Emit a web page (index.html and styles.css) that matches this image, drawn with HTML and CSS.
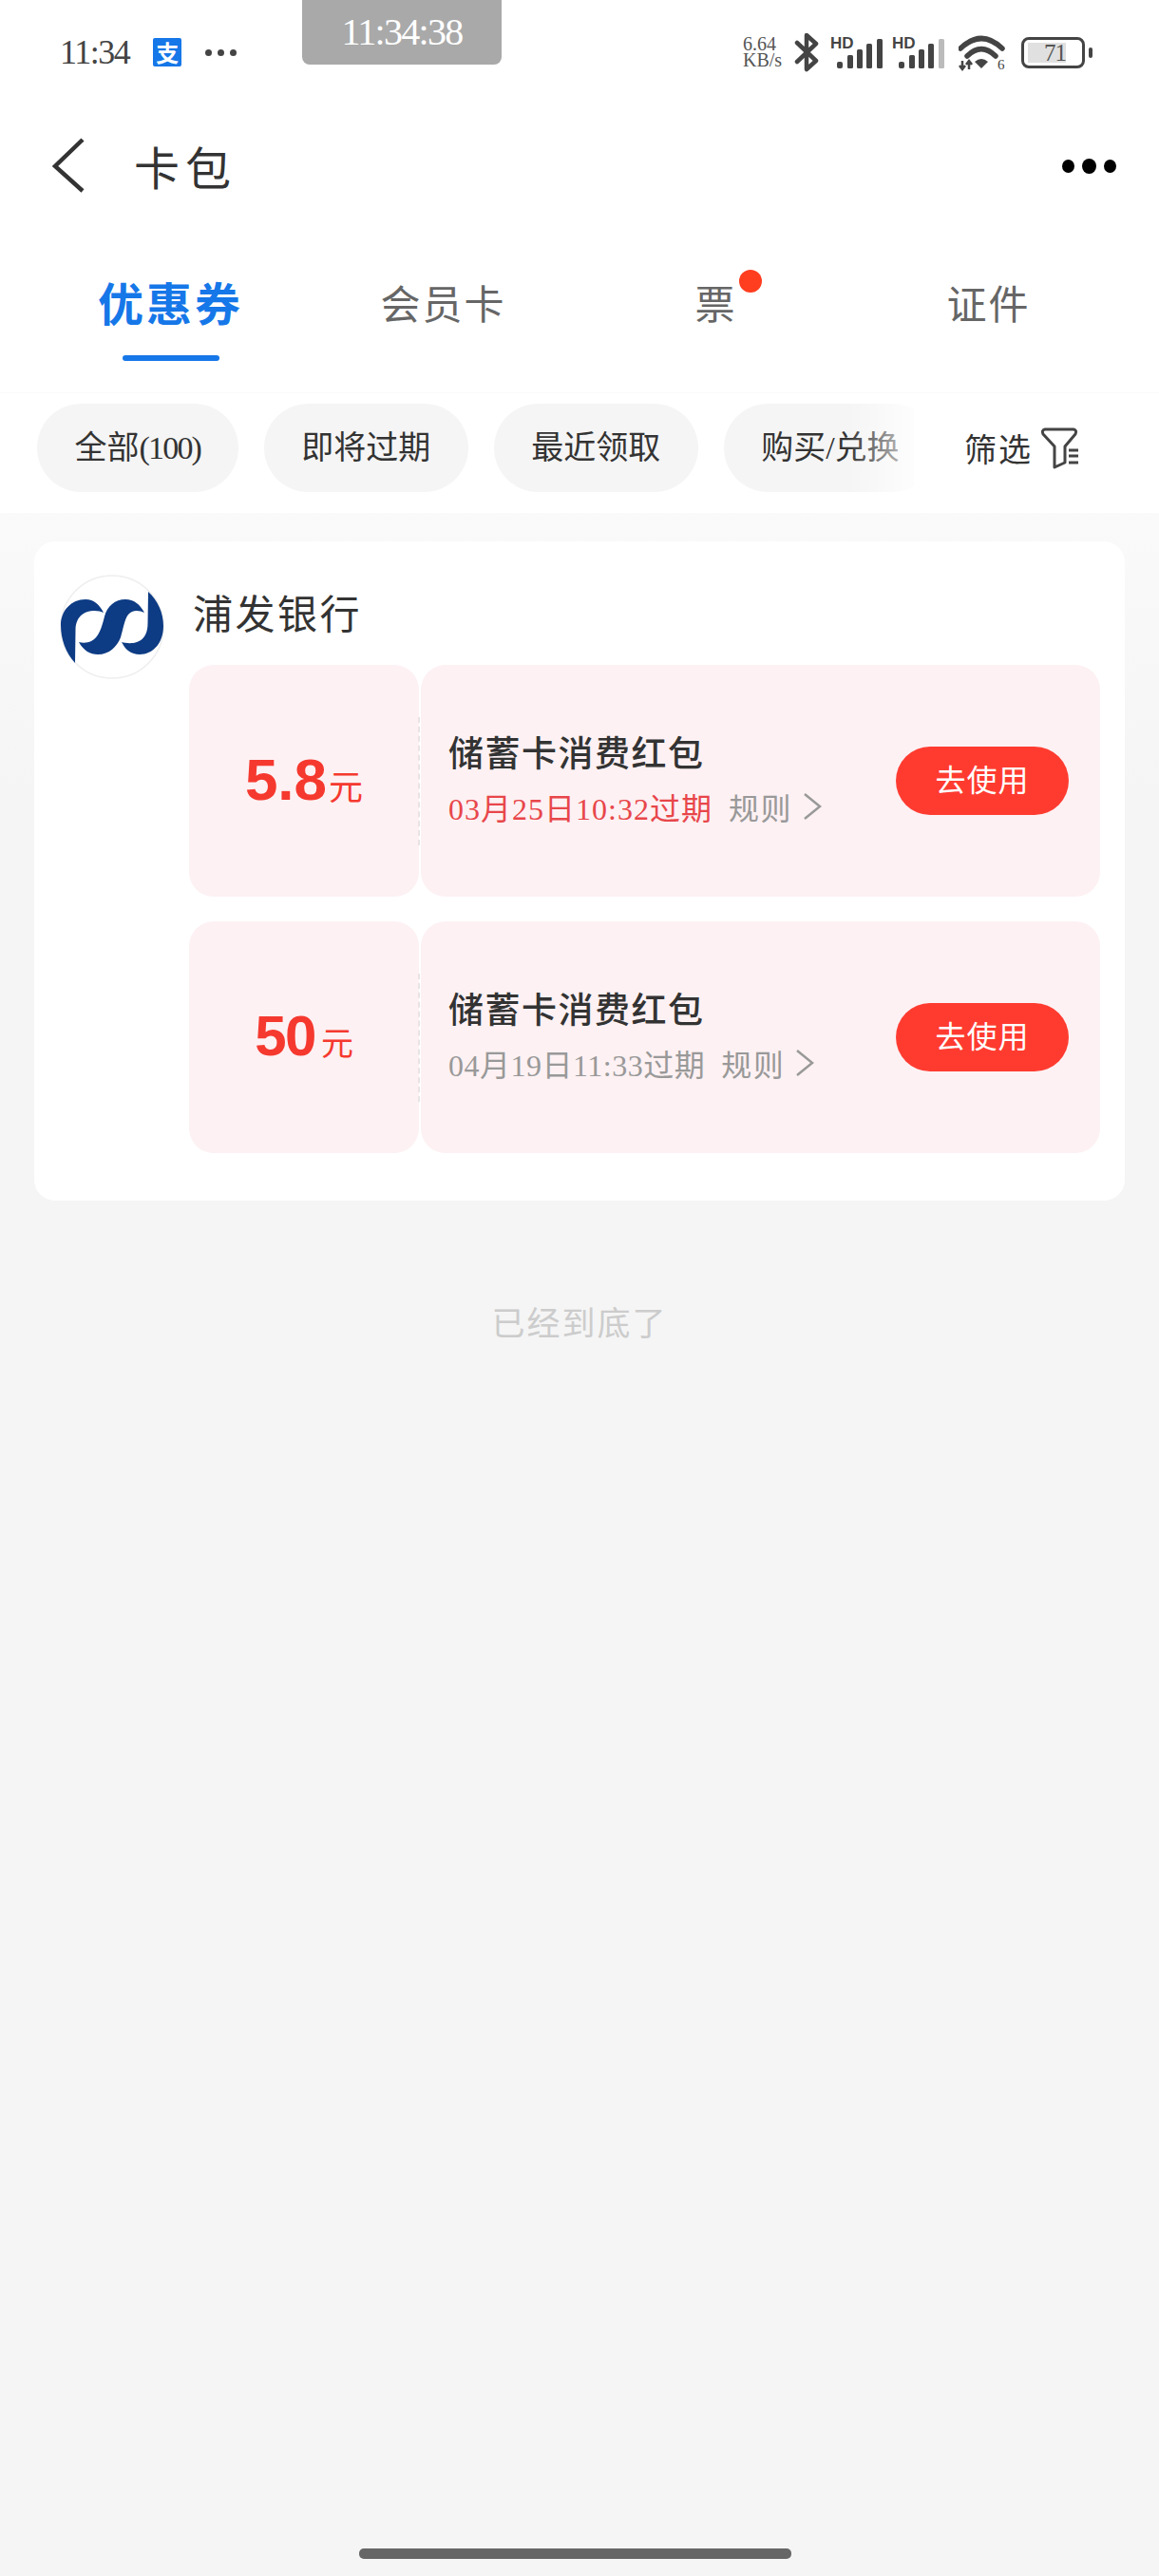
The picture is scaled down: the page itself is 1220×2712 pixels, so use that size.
FILE: index.html
```html
<!DOCTYPE html>
<html lang="zh-CN">
<head>
    <meta charset="UTF-8">
    <meta name="viewport" content="width=device-width, initial-scale=1.0">
    <title>卡包</title>
    <link rel="stylesheet" href="styles.css">
</head>
<body>
    <div class="page">
        <div class="top">
            <div class="status">
                <span class="time">11:34</span>
                <span class="ali-icon">支</span>
                <span class="status-dots"><i></i><i></i><i></i></span>
                <div class="status-right">
                    <div class="speed"><span>6.64</span><span>KB/s</span></div>
                    <svg class="bt" width="26" height="42" viewBox="0 0 26 42"><path d="M3 11 L23 30 L13 39 V3 L23 12 L3 31" fill="none" stroke="#444" stroke-width="4.5" stroke-linejoin="round" stroke-linecap="round"/></svg>
                    <svg class="sig" width="55" height="40" viewBox="0 -3 55 40">
                        <text x="0" y="13" class="hd">HD</text>
                        <rect x="7" y="27" width="6" height="7" rx="2" fill="#444"/>
                        <rect x="18" y="20" width="6" height="14" rx="1.5" fill="#444"/>
                        <rect x="28" y="14" width="6" height="20" rx="1.5" fill="#444"/>
                        <rect x="38" y="8" width="6" height="26" rx="1.5" fill="#444"/>
                        <rect x="49" y="3" width="6" height="31" rx="1.5" fill="#444"/>
                    </svg>
                    <svg class="sig sig2" width="55" height="40" viewBox="0 -3 55 40">
                        <text x="0" y="13" class="hd">HD</text>
                        <rect x="7" y="27" width="6" height="7" rx="2" fill="#444"/>
                        <rect x="18" y="20" width="6" height="14" rx="1.5" fill="#444"/>
                        <rect x="28" y="14" width="6" height="20" rx="1.5" fill="#444"/>
                        <rect x="38" y="8" width="6" height="26" rx="1.5" fill="#444"/>
                        <rect x="49" y="3" width="6" height="31" rx="1.5" fill="#bbb"/>
                    </svg>
                    <svg class="wifi" width="49" height="44" viewBox="0 -3 49 44">
                        <path d="M2 15 Q24 -6 46 15" fill="none" stroke="#444" stroke-width="5.5" stroke-linecap="round"/>
                        <path d="M9 23 Q24 8 39 23" fill="none" stroke="#444" stroke-width="5.5" stroke-linecap="round"/>
                        <path d="M17 29 Q24 23 31 29 L24 36 Z" fill="#444"/>
                        <path d="M4 28 V37 M1 33 L4 37 L7 33 M11 37 V28 M8 32 L11 28 L14 32" fill="none" stroke="#444" stroke-width="2.5"/>
                        <text x="41" y="37" class="wifi-num">6</text>
                    </svg>
                    <div class="battery"><div class="battery-fill">71</div></div>
                </div>
            </div>
            <div class="clock">11:34:38</div>

            <div class="nav">
                <svg width="34" height="58" viewBox="0 0 34 58"><path d="M32 2 L3 30 L32 56" fill="none" stroke="#333" stroke-width="4.5"/></svg>
                <h1 class="nav-title">卡包</h1>
                <div class="more"><i></i><i class="big"></i><i></i></div>
            </div>

            <div class="tabs">
                <div class="tab active"><span>优惠券</span><div class="tab-line"></div></div>
                <div class="tab"><span>会员卡</span></div>
                <div class="tab"><span class="has-dot">票</span></div>
                <div class="tab"><span>证件</span></div>
            </div>

            <div class="filters">
                <div class="chips">
                    <div class="chip">全部<span class="chip-count">(100)</span></div>
                    <div class="chip">即将过期</div>
                    <div class="chip">最近领取</div>
                    <div class="chip">购买/兑换</div>
                </div>
                <div class="filter-btn">
                    <span>筛选</span>
                    <svg width="40" height="44" viewBox="0 0 40 44">
                        <path d="M5 2 H35 Q39 3 37 7 L26 20 V37 L15 42 V20 L3 7 Q1 3 5 2 Z" fill="none" stroke="#444" stroke-width="3" stroke-linejoin="round"/>
                        <path d="M30 24 H40 M30 30 H40 M30 37 H40" stroke="#444" stroke-width="3"/>
                    </svg>
                </div>
            </div>
        </div>

        <div class="content">
            <div class="card">
                <svg class="bank-logo" width="110" height="110" viewBox="0 0 110 110">
                    <circle cx="55" cy="55" r="54" fill="#fff" stroke="#eee" stroke-width="1.5"/>
                    <path d="M16 93 C6 82 1 68 1 53 C1 38 12 26 27 26 C36 26 42 32 46 40 C38 36 17 36 16.5 58 Z" fill="#0d3b84"/>
                    <path d="M89 40 C84 31 78 26 69 26 C58 26 50 33 47 44 C44 56 41 66 33 70 C29 72 24 72 20 71 C25 80 32 84 40 84 C52 84 60 76 64 66 C67 56 68 47 72 42 C76 37 83 37 89 40 Z" fill="#0d3b84"/>
                    <path d="M93 18 C103 27 109 40 109 54 C109 72 98 84 84 84 C75 84 69 79 65 71 C73 73 92 75 92.5 52 Z" fill="#0d3b84"/>
                </svg>
                <div class="card-main">
                    <div class="bank-name">浦发银行</div>
                    <div class="coupon">
                        <div class="coupon-left">
                            <span class="amount">5.8</span><span class="unit">元</span>
                        </div>
                        <div class="coupon-body">
                            <div>
                                <div class="coupon-title">储蓄卡消费红包</div>
                                <div class="coupon-meta">
                                    <span class="expire soon">03月25日10:32过期</span>
                                    <span class="rule">规则</span>
                                    <svg width="20" height="30" viewBox="0 0 20 30"><path d="M2 2 L18 15 L2 28" fill="none" stroke="#999" stroke-width="2.5"/></svg>
                                </div>
                            </div>
                            <div class="use-btn">去使用</div>
                        </div>
                    </div>
                    <div class="coupon">
                        <div class="coupon-left">
                            <span class="amount narrow">50</span><span class="unit">元</span>
                        </div>
                        <div class="coupon-body">
                            <div>
                                <div class="coupon-title">储蓄卡消费红包</div>
                                <div class="coupon-meta">
                                    <span class="expire">04月19日11:33过期</span>
                                    <span class="rule">规则</span>
                                    <svg width="20" height="30" viewBox="0 0 20 30"><path d="M2 2 L18 15 L2 28" fill="none" stroke="#999" stroke-width="2.5"/></svg>
                                </div>
                            </div>
                            <div class="use-btn">去使用</div>
                        </div>
                    </div>
                </div>
            </div>
            <div class="end-note">已经到底了</div>
            <div class="home-bar"></div>
        </div>
    </div>
</body>
</html>
```

FILE: styles.css
```css
* {
    box-sizing: border-box;
}
body {
    margin: 0;
    background: #f5f5f5;
    font-family: "Liberation Serif", "Noto Sans CJK SC", serif;
    color: #333;
}
.page {
    position: relative;
    display: flex;
    flex-direction: column;
    min-height: 2712px;
}
.top {
    background: #fff;
}

/* status bar */
.status {
    display: flex;
    align-items: center;
    height: 110px;
    padding: 0 70px 0 63px;
}
.time {
    font-size: 36px;
    letter-spacing: -1.5px;
    color: #444;
}
.ali-icon {
    display: flex;
    justify-content: center;
    align-items: center;
    width: 30px;
    height: 30px;
    margin-left: 25px;
    background: #1677e8;
    border-radius: 2px;
    color: #fff;
    font-size: 24px;
    line-height: 30px;
    font-weight: 700;
    font-family: "Noto Sans CJK SC", sans-serif;
}
.status-dots {
    display: flex;
    gap: 6px;
    margin-left: 25px;
}
.status-dots i {
    width: 7px;
    height: 7px;
    border-radius: 50%;
    background: #444;
}
.status-right {
    display: flex;
    align-items: center;
    gap: 12px;
    margin-left: auto;
}
.speed {
    display: flex;
    flex-direction: column;
    width: 41px;
    font-size: 20px;
    line-height: 17px;
    color: #555;
}
.bt {
    margin-left: 1px;
}
.hd {
    font-family: "Liberation Sans", sans-serif;
    font-size: 17px;
    font-weight: 700;
    fill: #444;
}
.sig2 {
    margin-left: -2px;
}
.wifi {
    margin-left: 3px;
}
.wifi-num {
    font-family: "Liberation Serif", serif;
    font-size: 15px;
    fill: #444;
}
.battery {
    position: relative;
    width: 67px;
    height: 33px;
    margin-left: 5px;
    margin-right: 8px;
    padding: 3px 4px;
    border: 3px solid #444;
    border-radius: 8px;
}
.battery::after {
    content: "";
    position: absolute;
    top: 8px;
    right: -11px;
    width: 4px;
    height: 11px;
    border-radius: 2px;
    background: #444;
}
.battery-fill {
    width: 40px;
    height: 21px;
    background: #e0e0e0;
    font-size: 25px;
    line-height: 22px;
    letter-spacing: -1px;
    text-align: right;
    color: #555;
}
.clock {
    position: absolute;
    top: 0;
    left: 318px;
    width: 210px;
    height: 68px;
    background: #a9a9a9;
    border-radius: 0 0 8px 8px;
    color: #fff;
    font-size: 40px;
    letter-spacing: -1.7px;
    line-height: 68px;
    text-align: center;
}

/* title bar */
.nav {
    display: flex;
    align-items: center;
    height: 128px;
    padding: 0 45px 0 55px;
}
.nav-title {
    margin: 0 0 0 52px;
    font-size: 48px;
    font-weight: 400;
    letter-spacing: 6px;
}
.more {
    display: flex;
    align-items: center;
    gap: 8px;
    margin-top: 2px;
    margin-left: auto;
}
.more i {
    width: 13px;
    height: 14px;
    border-radius: 50%;
    background: #000;
}
.more i.big {
    width: 15px;
    height: 16px;
}

/* tabs */
.tabs {
    display: grid;
    grid-template-columns: repeat(4, 1fr);
    height: 176px;
    padding: 54px 36px 0;
    border-bottom: 1px solid #fafafa;
}
.tab {
    display: flex;
    flex-direction: column;
    align-items: center;
    font-size: 42px;
    line-height: 60px;
    letter-spacing: 2px;
    color: #666;
}
.tab.active {
    font-size: 48px;
    font-weight: 700;
    letter-spacing: 3px;
    color: #1677e8;
}
.tab-line {
    width: 102px;
    height: 6px;
    margin-top: 22px;
    border-radius: 3px;
    background: #1677e8;
}
.has-dot {
    position: relative;
}
.has-dot::after {
    content: "";
    position: absolute;
    top: -8px;
    left: 47px;
    width: 24px;
    height: 24px;
    border-radius: 50%;
    background: #ff3d1f;
}

/* filter chips */
.filters {
    display: flex;
    align-items: center;
    padding: 11px 0 22px;
}
.chips {
    position: relative;
    display: flex;
    gap: 27px;
    width: 962px;
    padding-left: 39px;
    overflow: hidden;
}
.chips::after {
    content: "";
    position: absolute;
    top: 0;
    right: 0;
    bottom: 0;
    width: 70px;
    background: linear-gradient(to right, rgba(255,255,255,0), rgba(255,255,255,.8));
}
.chip {
    flex: none;
    height: 93px;
    padding: 0 39.5px;
    border-radius: 47px;
    background: #f5f5f5;
    font-size: 34px;
    line-height: 93px;
}
.chip-count {
    letter-spacing: -1.8px;
}
.filter-btn {
    display: flex;
    align-items: center;
    gap: 8px;
    margin-left: 53px;
    font-size: 34px;
    letter-spacing: 2px;
}

/* card */
.content {
    display: flex;
    flex: 1;
    flex-direction: column;
    padding-top: 30px;
    background: linear-gradient(#fafafa, #f5f5f5 300px);
}
.card {
    display: flex;
    gap: 26px;
    margin: 0 36px;
    padding: 35px 26px 50px 27px;
    border-radius: 22px;
    background: #fff;
}
.bank-logo {
    flex: none;
}
.card-main {
    flex: 1;
}
.bank-name {
    margin: 0 0 9px 4px;
    font-size: 42px;
    line-height: 86px;
    letter-spacing: 2.5px;
}
.coupon {
    display: flex;
    gap: 2px;
    height: 244px;
    margin-bottom: 26px;
}
.coupon:last-child {
    margin-bottom: 0;
}
.coupon-left {
    position: relative;
    display: flex;
    justify-content: center;
    align-items: baseline;
    width: 242px;
    padding-top: 83px;
    border-radius: 26px;
    background: #fdf1f3;
    color: #f5392f;
}
.coupon-left::after {
    content: "";
    position: absolute;
    top: 55px;
    right: -1px;
    height: 135px;
    border-right: 2px dashed #e8e4e6;
}
.amount {
    font-family: "Liberation Sans", sans-serif;
    font-size: 62px;
    font-weight: 700;
    line-height: 76px;
}
.amount.narrow {
    font-size: 60px;
    letter-spacing: -1.5px;
}
.unit {
    margin-left: 2px;
    font-size: 36px;
}
.narrow + .unit {
    margin-left: 6px;
    font-size: 34px;
}
.coupon-body {
    display: flex;
    flex: 1;
    justify-content: space-between;
    align-items: center;
    padding: 0 33px 0 29px;
    border-radius: 26px;
    background: #fdf1f3;
}
.coupon-title {
    font-size: 37px;
    font-weight: 500;
    line-height: 56px;
    letter-spacing: 1.5px;
}
.coupon-meta {
    display: flex;
    align-items: center;
    height: 56px;
    margin-top: -2px;
    font-size: 32px;
    letter-spacing: .5px;
    color: #999;
}
.expire.soon {
    letter-spacing: 1px;
    color: #e8464a;
}
.rule {
    margin: 0 11px 0 17px;
    letter-spacing: 1.5px;
}
.use-btn {
    width: 182px;
    height: 72px;
    border-radius: 36px;
    background: #ff3b30;
    color: #fff;
    font-size: 32px;
    letter-spacing: 1px;
    line-height: 72px;
    text-align: center;
}
.end-note {
    margin-top: 106px;
    font-size: 35px;
    letter-spacing: 2px;
    line-height: 50px;
    text-align: center;
    color: #ccc;
}
.home-bar {
    width: 455px;
    height: 11px;
    margin: auto 0 18px 378px;
    border-radius: 5px;
    background: #666;
}
```
